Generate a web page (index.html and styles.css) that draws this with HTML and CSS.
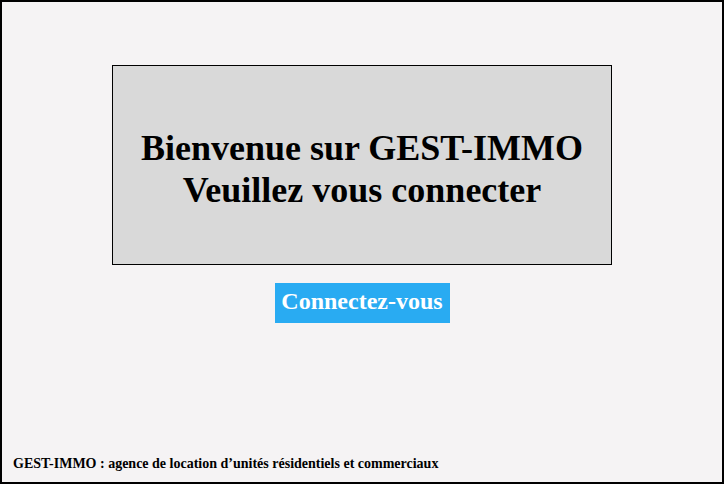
FILE: index.html
```html
<!DOCTYPE html>
<html lang="fr">
<head>
<meta charset="utf-8">
<title>GEST-IMMO</title>
<link rel="stylesheet" href="styles.css">
</head>
<body>
<div class="page">
  <div class="welcome">
    <h1 class="welcome-title">Bienvenue sur GEST-IMMO<br>Veuillez vous connecter</h1>
  </div>
  <a class="login-btn" href="#">Connectez-vous</a>
  <footer class="footer">GEST-IMMO : agence de location d’unités résidentiels et commerciaux</footer>
</div>
</body>
</html>
```
FILE: styles.css
```css
html, body {
  margin: 0;
  padding: 0;
}
body {
  font-family: "Liberation Serif", "Times New Roman", serif;
  background: #f5f3f4;
}
.page {
  box-sizing: border-box;
  width: 724px;
  height: 484px;
  border: 2px solid #000;
  background: #f5f3f4;
  display: flex;
  flex-direction: column;
  align-items: center;
}
.welcome {
  box-sizing: border-box;
  margin-top: 63px;
  width: 500px;
  height: 200px;
  padding-top: 8px;
  border: 1px solid #000;
  background: #d9d9d9;
  display: flex;
  align-items: center;
  justify-content: center;
}
.welcome-title {
  margin: 0;
  font-size: 36px;
  font-weight: bold;
  text-align: center;
  line-height: 42px;
  color: #000;
}
.login-btn {
  margin-top: 18px;
  width: 175px;
  height: 40px;
  box-sizing: border-box;
  padding-bottom: 3px;
  background: #29abf2;
  color: #fff;
  font-weight: bold;
  font-size: 24px;
  text-decoration: none;
  display: flex;
  align-items: center;
  justify-content: center;
}
.footer {
  margin-top: auto;
  align-self: flex-start;
  padding: 0 0 10px 11px;
  font-size: 14px;
  font-weight: bold;
  color: #000;
}
```
